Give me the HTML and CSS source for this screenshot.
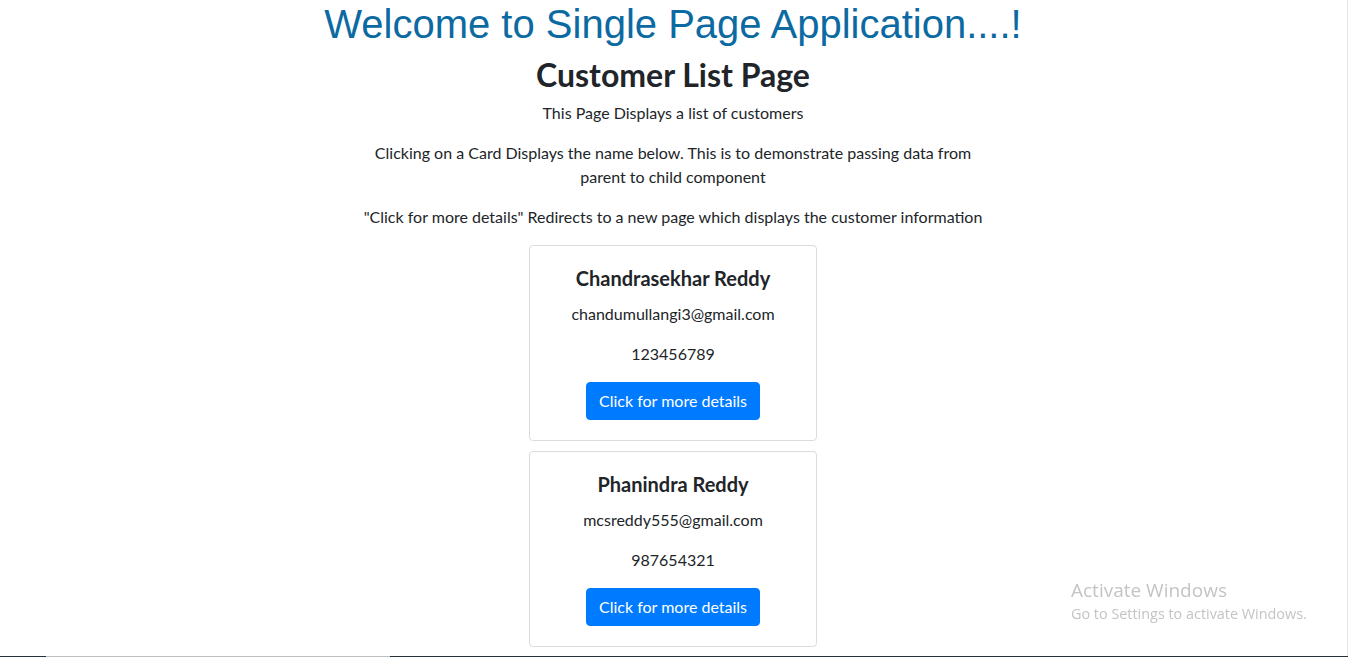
FILE: index.html
```html
<!DOCTYPE html>
<html lang="en">
<head>
<meta charset="utf-8">
<title>Customer List</title>
<link rel="stylesheet" href="styles.css">
</head>
<body>
<div class="app">
  <h1 class="welcome">Welcome to Single Page Application....!</h1>
  <main class="page">
    <h2 class="page-title">Customer List Page</h2>
    <p class="intro">This Page Displays a list of customers</p>
    <p class="intro">Clicking on a Card Displays the name below. This is to demonstrate passing data from parent to child component</p>
    <p class="intro">"Click for more details" Redirects to a new page which displays the customer information</p>
    <div class="card-list">
      <div class="card">
        <div class="card-body">
          <h5 class="card-title">Chandrasekhar Reddy</h5>
          <p class="card-text">chandumullangi3@gmail.com</p>
          <p class="card-text">123456789</p>
          <a class="btn" href="#">Click for more details</a>
        </div>
      </div>
      <div class="card">
        <div class="card-body">
          <h5 class="card-title">Phanindra Reddy</h5>
          <p class="card-text">mcsreddy555@gmail.com</p>
          <p class="card-text">987654321</p>
          <a class="btn" href="#">Click for more details</a>
        </div>
      </div>
    </div>
  </main>
</div>
<div class="watermark">
  <div class="wm-title">Activate Windows</div>
  <div class="wm-sub">Go to Settings to activate Windows.</div>
</div>
<div class="edge-right"></div>
<div class="edge-bottom"></div>
</body>
</html>
```
FILE: styles.css
```css
html, body { margin: 0; padding: 0; background: #fff; }
body {
  font-family: Lato, "Liberation Sans", sans-serif;
  font-size: 16px;
  line-height: 1.5;
  color: #212529;
}
.app { text-align: center; margin-right: 2px; }
.welcome {
  margin: 0 0 8px;
  font-family: "Liberation Sans", Arial, sans-serif;
  font-size: 40px;
  font-weight: 400;
  line-height: 1.2;
  color: #0c6aa2;
}
.page {
  width: 640px;
  margin: 0 auto;
  display: flex;
  flex-direction: column;
  align-items: center;
}
.page-title {
  margin: 0 0 7px;
  font-size: 32px;
  font-weight: 700;
  line-height: 1.2;
}
.intro { margin: 0 0 16px; }
.card-list {
  display: flex;
  flex-direction: column;
  align-items: center;
  gap: 10px;
}
.card {
  width: 288px;
  box-sizing: border-box;
  border: 1px solid #dcdcdc;
  border-radius: 4px;
  background: #fff;
}
.card-body { padding: 20px; }
.card-title {
  margin: 0 0 12px;
  font-size: 20px;
  font-weight: 700;
  line-height: 1.2;
}
.card-text { margin: 0 0 16px; }
.btn {
  display: inline-block;
  padding: 6px 12px;
  border: 1px solid #007bff;
  border-radius: 4px;
  background: #007bff;
  color: #fff;
  text-decoration: none;
  font-size: 16px;
  line-height: 24px;
}
.watermark {
  position: fixed;
  left: 1071px;
  top: 579px;
  color: #c4c4c4;
  font-family: "Open Sans", "Noto Sans", sans-serif;
  line-height: 1.2;
}
.wm-title { font-size: 19px; }
.wm-sub { font-size: 14.4px; margin-top: 3px; }
.edge-right {
  position: fixed;
  top: 0; right: 0; bottom: 0;
  width: 1px;
  background: #e6e6e6;
}
.edge-bottom {
  position: fixed;
  left: 0; right: 0; bottom: 0;
  height: 1px;
  background: linear-gradient(to right, #26323a 0 46px, #bdbdbd 46px 390px, #26323a 390px);
}
```
